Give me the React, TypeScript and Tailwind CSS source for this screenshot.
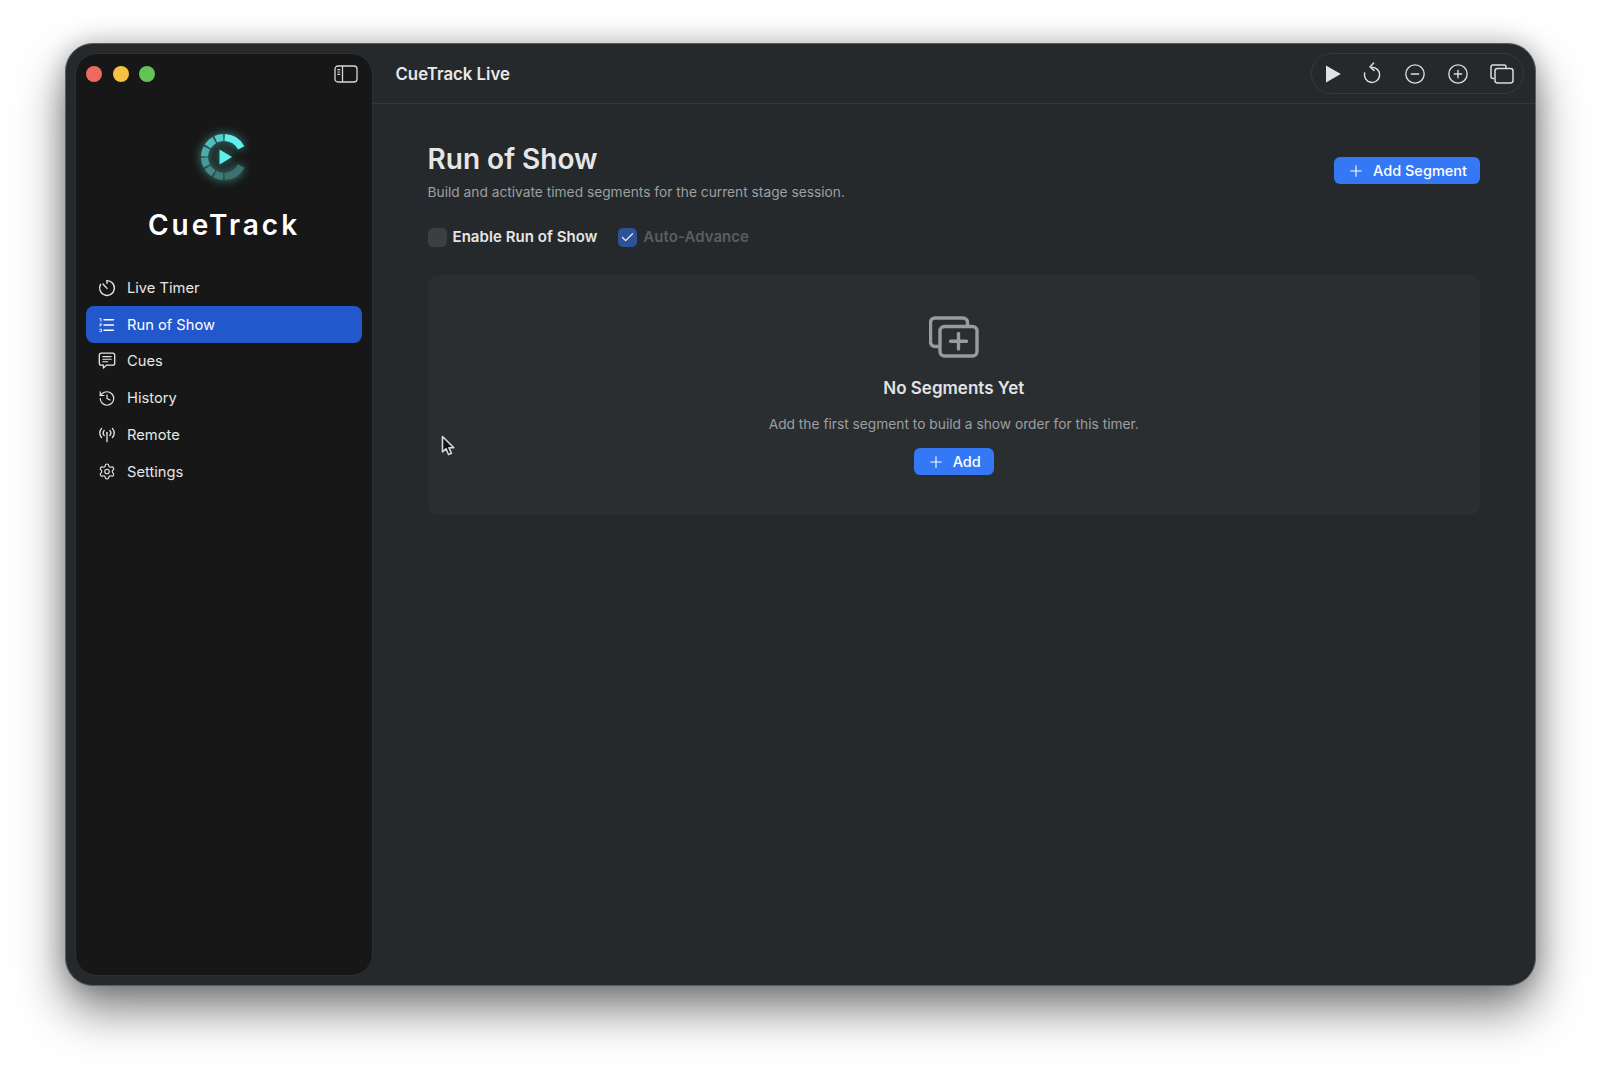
import React from "react";
import { History, Settings, CircleMinus, CirclePlus, Plus, Check } from "lucide-react";

const font = "font-['Inter','Liberation_Sans',sans-serif]";

function polar(r: number, a: number) {
  const t = ((a - 90) * Math.PI) / 180;
  return [25 + r * Math.cos(t), 25 + r * Math.sin(t)];
}
function arc(r: number, a: number, b: number) {
  const [x1, y1] = polar(r, a);
  const [x2, y2] = polar(r, b);
  return `M${x1.toFixed(2)} ${y1.toFixed(2)}A${r} ${r} 0 0 1 ${x2.toFixed(2)} ${y2.toFixed(2)}`;
}

const segments: [number, number, string][] = [
  [2, 62, "#60f0ea"],
  [118, 178, "#3e706e"],
  [183, 208, "#40797a"],
  [213, 238, "#438886"],
  [243, 268, "#489a98"],
  [272, 298, "#4cacaa"],
  [303, 330, "#50bfbc"],
  [335, 358, "#55cdc9"],
];

function Logo() {
  return (
    <svg width="50" height="50" viewBox="0 0 50 50" className="drop-shadow-[0_0_5px_rgba(94,238,230,0.6)]">
      {segments.map(([a, b, c]) => (
        <path key={a} d={arc(19.5, a, b)} fill="none" stroke={c} strokeWidth="7.2" />
      ))}
      <path d="M20.500 17.500l12.500 7.500-12.500 7.500z" fill="#60f0ea" />
    </svg>
  );
}

function TimerIcon() {
  return (
    <svg width="18" height="18" viewBox="0 0 18 18" fill="none" stroke="currentColor" strokeWidth="1.400" strokeLinecap="round">
      <path d="M9 1.600a7.400 7.400 0 1 1-6.400 3.700" />
      <path d="M9 1.600v2.600" />
      <path d="M5 5L9 9.400" />
    </svg>
  );
}
function ListIcon() {
  return (
    <svg width="18" height="18" viewBox="0 0 18 18" fill="none" stroke="currentColor" strokeWidth="1.400" strokeLinecap="round">
      <path d="M6 3.800h9.500M6 9h9.500M6 14.200h9.500" />
      <path d="M2 2.600h.9v2.600M1.900 8h1.500v1.100H2v1M1.900 13.200h1.500v2.200H1.900" strokeWidth="0.900" />
    </svg>
  );
}
function CueIcon() {
  return (
    <svg width="18" height="18" viewBox="0 0 18 18" fill="none" stroke="currentColor" strokeWidth="1.300" strokeLinejoin="round" strokeLinecap="round">
      <path d="M3.200 1.200h11.600a1.900 1.900 0 0 1 1.900 1.900v8.100a1.900 1.900 0 0 1-1.900 1.900H8.400l-3 3v-3H3.200a1.900 1.900 0 0 1-1.900-1.900V3.100a1.900 1.900 0 0 1 1.900-1.900z" />
      <path d="M4.800 4.600h8.400M4.800 7.200h8.400M4.800 9.800h5" strokeWidth="1.100" />
    </svg>
  );
}
function RemoteIcon() {
  return (
    <svg width="18" height="18" viewBox="0 0 18 18" fill="none" stroke="currentColor" strokeWidth="1.300" strokeLinecap="round">
      <circle cx="9" cy="7" r="1" fill="currentColor" stroke="none" />
      <path d="M9 8v7.500" />
      <path d="M6.200 4.400a4 4 0 0 0 0 5.200M11.800 4.400a4 4 0 0 1 0 5.200" />
      <path d="M3.600 2.400a7.400 7.400 0 0 0 0 9.200M14.400 2.400a7.400 7.400 0 0 1 0 9.200" />
    </svg>
  );
}

const nav = [
  { label: "Live Timer", icon: <TimerIcon /> },
  { label: "Run of Show", icon: <ListIcon />, active: true },
  { label: "Cues", icon: <CueIcon /> },
  { label: "History", icon: <History size={19} strokeWidth={1.6} /> },
  { label: "Remote", icon: <RemoteIcon /> },
  { label: "Settings", icon: <Settings size={19} strokeWidth={1.5} /> },
];

function SidebarToggle() {
  return (
    <svg width="24" height="18" viewBox="0 0 24 18" fill="none" stroke="#d8d8d8" strokeWidth="1.300">
      <rect x="1" y="1" width="22" height="16" rx="3" />
      <path d="M8.500 1v16" />
      <path d="M3.400 4.600h2.800M3.400 7h2.800M3.400 9.400h2.800" strokeWidth="1.100" />
    </svg>
  );
}

function ReplayIcon() {
  return (
    <svg width="20" height="24" viewBox="0 0 20 24" fill="none" stroke="#dcdcdc" strokeWidth="1.500" strokeLinecap="round" strokeLinejoin="round">
      <path d="M10 5.200a7.600 7.600 0 1 1-7.400 5.900" />
      <path d="M11.600 1L8 5l4 3.400" />
    </svg>
  );
}
function WindowsIcon() {
  return (
    <svg width="24" height="20" viewBox="0 0 24 20" fill="none" stroke="#dcdcdc" strokeWidth="1.500">
      <path d="M4.200 14.600H3a2 2 0 0 1-2-2V3a2 2 0 0 1 2-2h11a2 2 0 0 1 2 2v1" />
      <rect x="5" y="4.600" width="18" height="14.400" rx="2.400" />
    </svg>
  );
}
function AddStackIcon() {
  return (
    <svg width="50" height="42" viewBox="0 0 50 42" fill="none" stroke="#9b9b9b" strokeWidth="3.400" strokeLinecap="round">
      <path d="M9.500 30.500H6a4.500 4.500 0 0 1-4.500-4.500V6.500A4.500 4.500 0 0 1 6 2h28a4.500 4.500 0 0 1 4.500 4.500V9" />
      <rect x="11" y="10.500" width="37" height="29.500" rx="4.500" />
      <path d="M29.500 17.500v15.500M21.500 25.200h16" />
    </svg>
  );
}
function Cursor() {
  return (
    <svg width="14" height="22" viewBox="0 0 14 22">
      <path d="M1.500 1.500v15.500l3.600-3.300 2.400 5.800 2.900-1.200-2.500-5.600h4.900z" fill="#111" stroke="#d6d6d6" strokeWidth="1.600" strokeLinejoin="round" />
    </svg>
  );
}

export default function App() {
  return (
    <div className={`${font} h-[1071px] overflow-hidden bg-white pl-[65px] pt-[43px]`}>
      <div className="relative flex h-[943px] w-[1471px] rounded-[28px] border border-[#5a5d60] bg-[#25292c] shadow-[0_24px_48px_rgba(0,0,0,0.5),0_0_24px_rgba(0,0,0,0.22)]">
        <aside className="my-[9px] ml-[9px] flex w-[298px] shrink-0 flex-col rounded-[22px] border border-[#2e3133] bg-[#171717] px-[10px] text-[#e6e6e6]">
          <div className="flex h-[40px] items-center justify-between pr-[4px]">
            <div className="flex gap-[10.5px]">
              <span className="h-4 w-4 rounded-full bg-[#ee6a5f]" />
              <span className="h-4 w-4 rounded-full bg-[#f5c33f]" />
              <span className="h-4 w-4 rounded-full bg-[#61c454]" />
            </div>
            <SidebarToggle />
          </div>
          <div className="mt-[38px] flex flex-col items-center">
            <Logo />
            <div className="mt-[26px] text-[28px] leading-[34px] font-semibold tracking-[3px] text-white">CueTrack</div>
          </div>
          <nav className="mt-[27.5px] flex flex-col">
            {nav.map((n) => (
              <div
                key={n.label}
                className={`flex h-[36.75px] items-center gap-[11px] rounded-[8px] pl-[12px] text-[14.7px] ${
                  n.active ? "bg-[#2358cc] text-white" : ""
                }`}
              >
                <span className="flex h-[18px] w-[18px] items-center justify-center">{n.icon}</span>
                {n.label}
              </div>
            ))}
          </nav>
        </aside>
        <main className="flex min-w-0 flex-1 flex-col">
          <header className="flex h-[60px] shrink-0 items-center justify-between border-b border-[#33373a] pl-[22.5px] pr-[11px]">
            <div className="pt-[2px] text-[16.8px] font-semibold text-[#e8e8e8]">CueTrack Live</div>
            <div className="flex h-[41px] w-[213px] items-center justify-between rounded-full border border-[#353a3d] pl-[13px] pr-[9px]">
              <svg width="16" height="18" viewBox="0 0 16 18"><path d="M1 .6l14.800 8.400L1 17.400z" fill="#e2e2e2" strokeLinejoin="round" /></svg>
              <ReplayIcon />
              <CircleMinus size={22} strokeWidth={1.5} color="#dcdcdc" />
              <CirclePlus size={22} strokeWidth={1.5} color="#dcdcdc" />
              <WindowsIcon />
            </div>
          </header>
          <div className="relative flex-1 pl-[54.5px] pr-[55px] pt-[36px]">
            <div className="flex items-start justify-between">
              <div>
                <h1 className="text-[28px] leading-[38px] font-semibold text-[#e6e6e6]">Run of Show</h1>
                <p className="mt-[4px] text-[13.75px] leading-[20px] text-[#9d9fa1]">Build and activate timed segments for the current stage session.</p>
              </div>
              <button className="mt-[17px] flex h-[27px] w-[146px] items-center justify-center gap-[8px] rounded-[6px] bg-[#3478f6] text-[14.5px] font-medium text-white">
                <Plus size={18} strokeWidth={1.5} />
                Add Segment
              </button>
            </div>
            <div className="mt-[25px] flex h-[20px] items-center text-[15px] font-semibold tracking-[0.05px]">
              <span className="h-[19px] w-[19px] rounded-[5px] bg-[#3b3f42]" />
              <span className="ml-[6px] text-[#e6e6e6]">Enable Run of Show</span>
              <span className="ml-[21px] flex h-[19px] w-[19px] items-center justify-center rounded-[5px] bg-[#2f5197]">
                <Check size={15} strokeWidth={2.2} color="#e6ecf8" />
              </span>
              <span className="ml-[6px] text-[#5b5e61]">Auto-Advance</span>
            </div>
            <section className="mt-[28px] flex h-[240px] flex-col items-center rounded-[10px] bg-[#2a2e31] pt-[41px]">
              <AddStackIcon />
              <h2 className="mt-[19px] text-[17px] leading-[22px] font-semibold text-[#e2e2e2]">No Segments Yet</h2>
              <p className="mt-[15px] text-[13.75px] leading-[20px] text-[#9d9fa1]">Add the first segment to build a show order for this timer.</p>
              <button className="mt-[14px] flex h-[27px] w-[80px] items-center justify-center gap-[8px] rounded-[6px] bg-[#3478f6] text-[14.5px] font-medium text-white">
                <Plus size={18} strokeWidth={1.5} />
                Add
              </button>
            </section>
            <div className="absolute left-[68px] top-[331px]">
              <Cursor />
            </div>
          </div>
        </main>
      </div>
    </div>
  );
}
